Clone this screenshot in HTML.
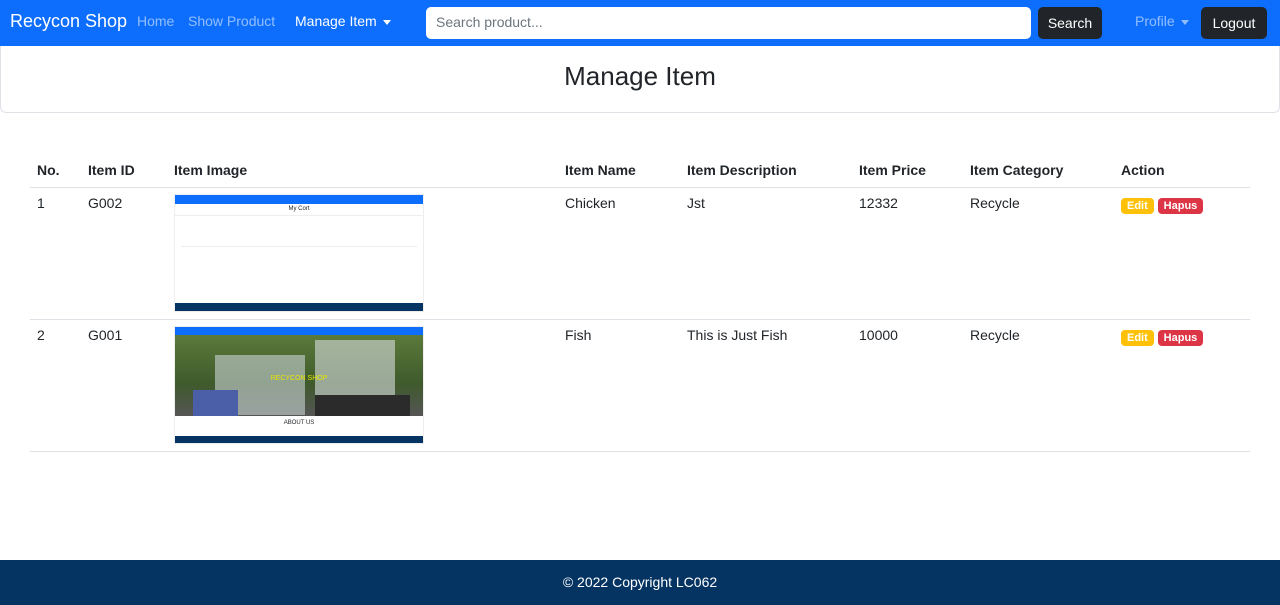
<!DOCTYPE html>
<html><head><meta charset="utf-8"><style>
*{box-sizing:border-box;margin:0;padding:0}
body{width:1280px;height:605px;background:#fff;font-family:"Liberation Sans",sans-serif;color:#212529;position:relative;overflow:hidden;font-size:14px}
.nav{position:absolute;left:0;top:0;width:1280px;height:46px;background:#0d6efd}
.nav span{position:absolute;top:13px;font-size:14px}
.brand{left:10px;top:11px!important;font-size:18px!important;color:#fff}
.dim{color:rgba(255,255,255,.55)}
.w{color:#fff}
.caret{display:inline-block;border-top:5px solid currentColor;border-left:4px solid transparent;border-right:4px solid transparent;vertical-align:middle;margin-left:6px}
.search{position:absolute;left:426px;top:7px;width:605px;height:32px;background:#fff;border-radius:5px;color:#6c757d;padding:7px 10px;font-size:14px}
.btn{position:absolute;background:#212529;color:#fff;border-radius:5px;font-size:14px;text-align:center;line-height:32px;height:32px;top:7px}
.hdr{position:absolute;left:0;top:46px;width:1280px;height:67px;border:1px solid #dee2e6;border-top:none;border-radius:0 0 6px 6px;text-align:center;font-size:26px;padding-top:15px}
table{position:absolute;left:30px;top:153px;width:1220px;border-collapse:collapse}
th{font-weight:bold;text-align:left;height:34px;border-bottom:1px solid #dee2e6;font-size:14px;padding:0 7px}
td{vertical-align:top;padding:7px 7px;border-bottom:1px solid #dee2e6;font-size:14px}
.b{display:inline-block;font-size:11px;font-weight:bold;color:#fff;padding:2px 6px;border-radius:4px;margin-top:3px}
.foot{position:absolute;left:0;top:560px;width:1280px;height:45px;background:#063462;color:#fff;text-align:center;line-height:45px;font-size:14px}
.img{width:250px;height:118px;position:relative;border:1px solid #eee;font-size:4px;overflow:hidden}
</style></head><body>
<div class="nav">
<span class="brand">Recycon Shop</span>
<span class="dim" style="left:137px">Home</span>
<span class="dim" style="left:188px">Show Product</span>
<span class="w" style="left:295px">Manage Item<i class="caret"></i></span>
<div class="search">Search product...</div>
<div class="btn" style="left:1038px;width:64px">Search</div>
<span class="dim" style="left:1135px">Profile<i class="caret"></i></span>
<div class="btn" style="left:1201px;width:66px">Logout</div>
</div>
<div class="hdr">Manage Item</div>
<table>
<tr><th style="width:51px">No.</th><th style="width:86px">Item ID</th><th style="width:391px">Item Image</th><th style="width:122px">Item Name</th><th style="width:172px">Item Description</th><th style="width:111px">Item Price</th><th style="width:151px">Item Category</th><th>Action</th></tr>
<tr style="height:131px"><td>1</td><td>G002</td><td style="padding-top:6px"><div class="img">
<div style="height:9px;background:#0d6efd"></div>
<div style="text-align:center;font-size:6px;padding-top:2px;border-bottom:1px solid #eee;height:12px">My Cort</div>
<div style="position:absolute;top:30px;left:6px;right:6px;height:22px;border-bottom:1px solid #eee"></div>
<div style="position:absolute;bottom:0;left:0;right:0;height:8px;background:#063462"></div>
</div></td><td>Chicken</td><td>Jst</td><td>12332</td><td>Recycle</td><td><span class="b" style="background:#ffc107">Edit</span> <span class="b" style="background:#dc3545">Hapus</span></td></tr>
<tr style="height:131px"><td>2</td><td>G001</td><td style="padding-top:6px"><div class="img">
<div style="height:8px;background:#0d6efd"></div>
<div style="height:81px;background:linear-gradient(180deg,#5b7a3a,#3f5a2c 60%,#555 100%);position:relative">
<div style="position:absolute;left:40px;top:20px;width:90px;height:60px;background:#c9d3d6;opacity:.6"></div>
<div style="position:absolute;left:140px;top:5px;width:80px;height:70px;background:#d7dde0;opacity:.6"></div>
<div style="position:absolute;left:140px;top:60px;width:95px;height:21px;background:#2b2b2b"></div>
<div style="position:absolute;left:18px;top:55px;width:45px;height:26px;background:#4a5fa8"></div>
<div style="position:absolute;left:0;right:0;top:40px;text-align:center;color:#e6e600;font-size:7px">RECYCON SHOP</div>
</div>
<div style="text-align:center;font-size:6px;padding-top:4px">ABOUT US</div>
<div style="position:absolute;bottom:0;left:0;right:0;height:7px;background:#063462"></div>
</div></td><td>Fish</td><td>This is Just Fish</td><td>10000</td><td>Recycle</td><td><span class="b" style="background:#ffc107">Edit</span> <span class="b" style="background:#dc3545">Hapus</span></td></tr>
</table>
<div class="foot">© 2022 Copyright LC062</div>
</body></html>
